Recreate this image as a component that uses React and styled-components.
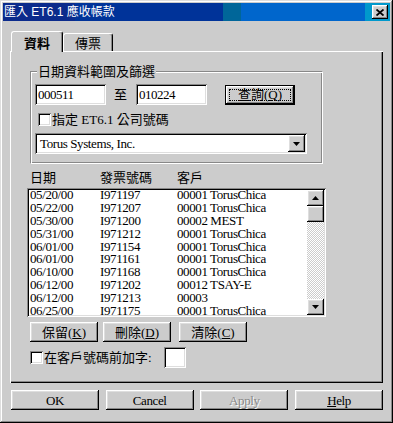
import React from 'react';
import styled, { createGlobalStyle, css } from 'styled-components';

const Global = createGlobalStyle`
  html, body { margin: 0; padding: 0; background: #cccccc; }
  body {
    font-family: "Liberation Serif", "Noto Sans CJK TC", serif;
    font-size: 13px;
    color: #000;
  }
  * { box-sizing: border-box; }
`;

const raised = css`
  box-shadow: inset -1px -1px #000, inset 1px 1px #fff, inset -2px -2px #888, inset 2px 2px #dedede;
`;
const sunken = css`
  box-shadow: inset 1px 1px #888, inset -1px -1px #fff, inset 2px 2px #000, inset -2px -2px #dedede;
`;

const Window = styled.div`
  width: 393px;
  height: 423px;
  background: #cccccc;
  padding: 3px;
  display: flex;
  flex-direction: column;
  box-shadow: inset -1px -1px #000, inset 1px 1px #dedede, inset -2px -2px #888, inset 2px 2px #fff;
`;

const TitleBar = styled.div`
  height: 18px;
  flex: none;
  display: flex;
  align-items: center;
  justify-content: space-between;
  padding: 0 2px 0 1px;
  background: linear-gradient(
    to right,
    #0b2b8c 0 72px,
    #003399 72px 220px,
    #006699 220px 238px,
    #0066cc 238px 362px,
    #0099cc 362px
  );
`;

const TitleText = styled.span`
  color: #fff;
  font-family: "Liberation Sans", "Noto Sans CJK TC", sans-serif;
  font-size: 12px;
  line-height: 14px;
  white-space: pre;
`;

const CloseBox = styled.div`
  width: 16px;
  height: 14px;
  background: #cccccc;
  display: flex;
  align-items: center;
  justify-content: center;
  ${raised}
`;

const Body = styled.div`
  flex: 1;
  display: flex;
  flex-direction: column;
  padding: 10px 7px 0 7px;
`;

const TabStrip = styled.div`
  height: 20px;
  flex: none;
  display: flex;
  align-items: flex-end;
  padding-left: 1px;
`;

const Tab = styled.div`
  position: relative;
  z-index: ${p => (p.$active ? 1 : 0)};
  width: ${p => p.$w}px;
  height: ${p => (p.$active ? 21 : 18)}px;
  margin-bottom: ${p => (p.$active ? -1 : 0)}px;
  background: #cccccc;
  border-top: 1px solid #fff;
  border-left: 1px solid #fff;
  border-right: 1px solid #000;
  border-radius: 3px 3px 0 0;
  box-shadow: inset -1px 0 #888;
  display: flex;
  align-items: center;
  justify-content: center;
  font-family: "Noto Sans CJK TC", sans-serif;
  font-size: 13px;
  line-height: 15px;
  font-weight: ${p => (p.$active ? 700 : 400)};
  padding-top: ${p => (p.$active ? 1 : 0)}px;
`;

const Panel = styled.div`
  width: 373px;
  height: 332px;
  flex: none;
  display: flex;
  flex-direction: column;
  padding: 20px 0 0 17px;
  box-shadow: inset 1px 1px #fff, inset -1px -1px #000, inset -2px -2px #888;
`;

const GroupBox = styled.div`
  margin-left: 3px;
  width: 293px;
  display: flex;
  flex-direction: column;
  padding: 0 0 9px 4px;
  border: 1px solid;
  border-color: #888 #fff #fff #888;
  box-shadow: inset 1px 1px #fff, inset -1px -1px #888;
`;

const Legend = styled.div`
  align-self: flex-start;
  height: 16px;
  margin: -9px 0 0 2px;
  padding: 0 1px;
  background: #cccccc;
  font-family: "Noto Sans CJK TC", sans-serif;
  font-size: 13px;
  line-height: 16px;
`;

const Row = styled.div`
  display: flex;
  align-items: center;
  height: ${p => p.$h}px;
  margin-top: ${p => p.$mt || 0}px;
`;

const TextBox = styled.div`
  width: ${p => p.$w}px;
  height: 21px;
  flex: none;
  background: #fff;
  ${sunken}
  padding: 0 3px;
  display: flex;
  align-items: center;
  font-size: 13px;
  line-height: 15px;
  letter-spacing: -0.5px;
  margin-left: ${p => p.$ml || 0}px;
`;

const Label = styled.span`
  font-family: "Liberation Serif", "Noto Sans CJK TC", serif;
  font-size: 13px;
  line-height: 15px;
  margin: ${p => p.$m || '0'};
  white-space: pre;
`;

const Button = styled.div`
  width: ${p => p.$w}px;
  height: 20px;
  flex: none;
  margin: ${p => p.$m || '0'};
  background: #cccccc;
  display: flex;
  align-items: center;
  justify-content: center;
  font-size: 13px;
  line-height: 15px;
  letter-spacing: ${p => (p.$latin ? '-0.4px' : '0')};
  color: ${p => (p.$disabled ? '#888' : '#000')};
  text-shadow: ${p => (p.$disabled ? '1px 1px 0 #fff' : 'none')};
  ${raised}
  ${p =>
    p.$default &&
    css`
      box-shadow: inset 0 0 0 1px #000, inset -2px -2px #000, inset 2px 2px #fff,
        inset -3px -3px #888, inset 3px 3px #dedede;
    `}
`;

const FocusRect = styled.span`
  flex: 1;
  align-self: stretch;
  margin: 4px;
  border: 1px dotted #000;
  display: flex;
  align-items: center;
  justify-content: center;
`;

const Check = styled.div`
  width: 13px;
  height: 13px;
  flex: none;
  background: #fff;
  margin: ${p => p.$m || '0'};
  ${sunken}
`;

const Combo = styled.div`
  width: 272px;
  height: 21px;
  background: #fff;
  ${sunken}
  padding: 2px 2px 2px 5px;
  display: flex;
  align-items: center;
  justify-content: space-between;
  line-height: 15px;
  letter-spacing: -0.4px;
`;

const ArrowBtn = styled.div`
  width: 17px;
  height: ${p => p.$h || 17}px;
  flex: none;
  background: #cccccc;
  display: flex;
  align-items: center;
  justify-content: center;
  ${raised}
`;

const Heading = styled.div`
  margin-top: 5px;
  height: 16px;
  padding-left: 3px;
  display: grid;
  grid-template-columns: 70px 77px 1fr;
  font-family: "Noto Sans CJK TC", sans-serif;
  font-size: 13px;
  line-height: 16px;
`;

const ListBox = styled.div`
  margin-top: 3px;
  width: 299px;
  height: 129px;
  flex: none;
  background: #fff;
  ${sunken}
  padding: 2px;
  display: flex;
`;

const Rows = styled.div`
  flex: 1;
  overflow: hidden;
  margin-top: -1px;
  padding-left: 1px;
`;

const ListRow = styled.div`
  display: grid;
  grid-template-columns: 70px 77px 1fr;
  height: 12.9px;
  line-height: 12.9px;
  font-size: 13px;
  letter-spacing: -0.4px;
  white-space: pre;
`;

const ScrollBar = styled.div`
  width: 17px;
  display: flex;
  flex-direction: column;
`;

const Thumb = styled.div`
  height: 16px;
  background: #cccccc;
  ${raised}
`;

const Track = styled.div`
  flex: 1;
  background: repeating-conic-gradient(#ffffff 0 25%, #cccccc 0 50%) 0 0 / 2px 2px;
`;

const Footer = styled.div`
  margin-top: 7px;
  padding-left: 1px;
  width: 373px;
  display: flex;
  justify-content: space-between;
`;

const Up = () => (
  <svg width="7" height="4" viewBox="0 0 7 4"><path d="M3.5 0 L7 4 L0 4 Z" fill="#000" /></svg>
);
const Down = () => (
  <svg width="7" height="4" viewBox="0 0 7 4"><path d="M0 0 L7 0 L3.5 4 Z" fill="#000" /></svg>
);

const rows = [
  ['05/20/00', 'I971197', '00001 TorusChica'],
  ['05/22/00', 'I971207', '00001 TorusChica'],
  ['05/30/00', 'I971200', '00002 MEST'],
  ['05/31/00', 'I971212', '00001 TorusChica'],
  ['06/01/00', 'I971154', '00001 TorusChica'],
  ['06/01/00', 'I971161', '00001 TorusChica'],
  ['06/10/00', 'I971168', '00001 TorusChica'],
  ['06/12/00', 'I971202', '00012 TSAY-E'],
  ['06/12/00', 'I971213', '00003'],
  ['06/25/00', 'I971175', '00001 TorusChica'],
];

export default function App() {
  return (
    <>
      <Global />
      <Window>
        <TitleBar>
          <TitleText>匯入 ET6.1 應收帳款</TitleText>
          <CloseBox>
            <svg width="8" height="7" viewBox="0 0 8 7">
              <path d="M0.5 0.5 L7.5 6.5 M7.5 0.5 L0.5 6.5" stroke="#000" strokeWidth="1.8" />
            </svg>
          </CloseBox>
        </TitleBar>
        <Body>
          <TabStrip>
            <Tab $active $w={52}>資料</Tab>
            <Tab $w={50}>傳票</Tab>
          </TabStrip>
          <Panel>
            <GroupBox>
              <Legend>日期資料範圍及篩選</Legend>
              <Row $h={21} $mt={5}>
                <TextBox $w={71}>000511</TextBox>
                <Label $m="0 9px 0 8px">至</Label>
                <TextBox $w={71}>010224</TextBox>
                <Button $default $w={70} $m="0 0 0 18px">
                  <FocusRect>查詢(<u>Q</u>)</FocusRect>
                </Button>
              </Row>
              <Row $h={13} $mt={8}>
                <Check $m="0 1px 0 3px" />
                <Label>指定 ET6.1 公司號碼</Label>
              </Row>
              <Row $h={21} $mt={7}>
                <Combo>
                  <span>Torus Systems, Inc.</span>
                  <ArrowBtn><Down /></ArrowBtn>
                </Combo>
              </Row>
            </GroupBox>
            <Heading>
              <span>日期</span>
              <span>發票號碼</span>
              <span>客戶</span>
            </Heading>
            <ListBox>
              <Rows>
                {rows.map((r, i) => (
                  <ListRow key={i}>
                    <span>{r[0]}</span>
                    <span>{r[1]}</span>
                    <span>{r[2]}</span>
                  </ListRow>
                ))}
              </Rows>
              <ScrollBar>
                <ArrowBtn $h={16}><Up /></ArrowBtn>
                <Thumb />
                <Track />
                <ArrowBtn $h={16}><Down /></ArrowBtn>
              </ScrollBar>
            </ListBox>
            <Row $h={20} $mt={5}>
              <Button $w={68} $m="0 0 0 3px">保留(<u>K</u>)</Button>
              <Button $w={68} $m="0 0 0 5px">刪除(<u>D</u>)</Button>
              <Button $w={68} $m="0 0 0 8px">清除(<u>C</u>)</Button>
            </Row>
            <Row $h={21} $mt={5}>
              <Check $m="0 1px 0 3px" />
              <Label>在客戶號碼前加字:</Label>
              <TextBox $w={22} $ml={12} />
            </Row>
          </Panel>
          <Footer>
            <Button $w={88} $latin>OK</Button>
            <Button $w={88} $latin>Cancel</Button>
            <Button $w={88} $latin $disabled>Apply</Button>
            <Button $w={88} $latin><u>H</u>elp</Button>
          </Footer>
        </Body>
      </Window>
    </>
  );
}
